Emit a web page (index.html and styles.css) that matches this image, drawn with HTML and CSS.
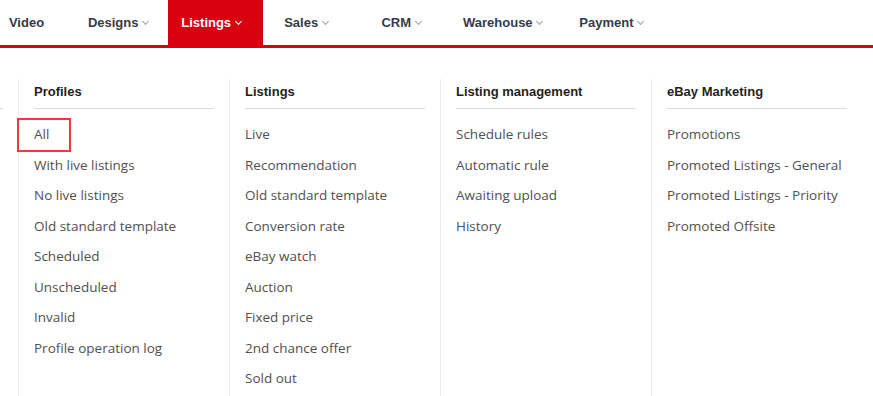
FILE: index.html
```html
<!DOCTYPE html>
<html lang="en">
<head>
  <meta charset="UTF-8">
  <title>Listings menu</title>
  <link rel="stylesheet" href="styles.css">
</head>
<body>

  <nav class="topnav">
    <a class="nav-item plain">Video</a>
    <a class="nav-item even">Designs <span class="caret"></span></a>
    <a class="nav-item active">Listings <span class="caret"></span></a>
    <a class="nav-item">Sales <span class="caret"></span></a>
    <a class="nav-item">CRM <span class="caret"></span></a>
    <a class="nav-item wide">Warehouse <span class="caret"></span></a>
    <a class="nav-item">Payment <span class="caret"></span></a>
  </nav>

  <div class="dropdown">
    <!-- previous column, scrolled out of view -->
    <div class="menu-col">
      <h3>&nbsp;</h3>
    </div>

    <div class="menu-col">
      <h3>Profiles</h3>
      <ul>
        <li><span class="marked">All</span></li>
        <li>With live listings</li>
        <li>No live listings</li>
        <li>Old standard template</li>
        <li>Scheduled</li>
        <li>Unscheduled</li>
        <li>Invalid</li>
        <li>Profile operation log</li>
      </ul>
    </div>

    <div class="menu-col">
      <h3>Listings</h3>
      <ul>
        <li>Live</li>
        <li>Recommendation</li>
        <li>Old standard template</li>
        <li>Conversion rate</li>
        <li>eBay watch</li>
        <li>Auction</li>
        <li>Fixed price</li>
        <li>2nd chance offer</li>
        <li>Sold out</li>
      </ul>
    </div>

    <div class="menu-col">
      <h3>Listing management</h3>
      <ul>
        <li>Schedule rules</li>
        <li>Automatic rule</li>
        <li>Awaiting upload</li>
        <li>History</li>
      </ul>
    </div>

    <div class="menu-col">
      <h3>eBay Marketing</h3>
      <ul>
        <li>Promotions</li>
        <li>Promoted Listings - General</li>
        <li>Promoted Listings - Priority</li>
        <li>Promoted Offsite</li>
      </ul>
    </div>
  </div>

</body>
</html>
```

FILE: styles.css
```css
body {
  margin: 0;
  font-family: "Liberation Sans", Arial, sans-serif;
  background-color: white;
  overflow: hidden;
  height: 396px;
}

/* top menu bar */
.topnav {
  display: flex;
  height: 45px;
  border-bottom: 3px solid #d9000f;
  margin-left: -22px;
}

.nav-item {
  box-sizing: border-box;
  min-width: 95px;
  padding: 0 14px 0 10px;
  display: flex;
  align-items: center;
  justify-content: center;
  font-size: 13px;
  font-weight: bold;
  color: #363b48;
  white-space: pre;
}

.nav-item.plain {
  padding: 0 11px 0 13px;
}

.nav-item.even {
  padding: 0 12px;
}

.nav-item.wide {
  padding: 0 21px 0 10px;
}

.nav-item.active {
  background-color: #d9000f;
  color: white;
}

.caret {
  display: inline-block;
  width: 4px;
  height: 4px;
  border-right: 1px solid #a0a0a0;
  border-bottom: 1px solid #a0a0a0;
  transform: rotate(45deg);
  margin: -3px 5px 0 1px;
}

.nav-item.active .caret {
  border-color: white;
}

/* dropdown panel */
.dropdown {
  display: flex;
  margin-left: -193px;
  padding-top: 31px;
}

.menu-col {
  width: 180px;
  padding: 0 15px;
  border-left: 1px solid #ebebeb;
  min-height: 320px;
}

.menu-col h3 {
  margin: 0;
  padding: 3px 0 6px;
  line-height: 20px;
  font-size: 13px;
  font-weight: bold;
  color: #1f1f1f;
  border-bottom: 1px solid #dcdcdc;
}

.menu-col ul {
  list-style: none;
  margin: 0;
  padding: 10px 0 0;
}

.menu-col li {
  font-family: "Open Sans", "Liberation Sans", sans-serif;
  font-size: 13.5px;
  line-height: 30.5px;
  color: #505050;
  white-space: nowrap;
}

.marked {
  position: relative;
}

.marked::after {
  content: "";
  position: absolute;
  left: -17px;
  top: -7px;
  width: 50px;
  height: 30px;
  border: 2px solid #ee3a3a;
}
```
